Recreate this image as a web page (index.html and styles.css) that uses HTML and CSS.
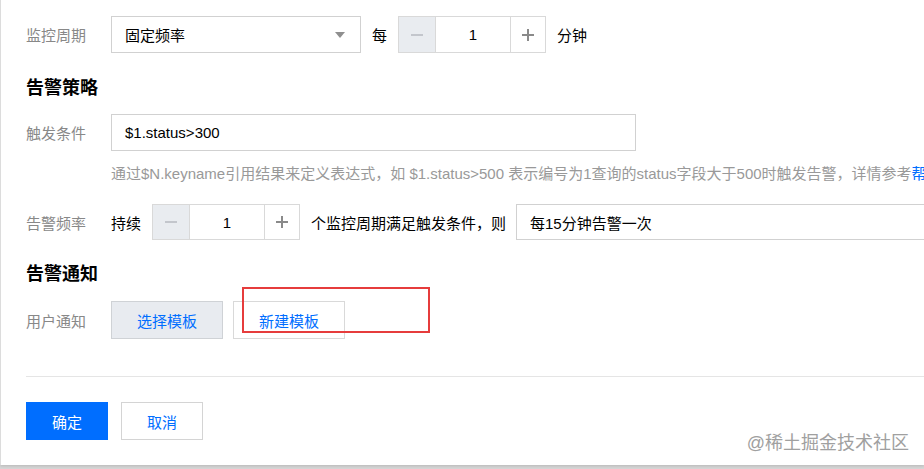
FILE: index.html
```html
<!DOCTYPE html>
<html lang="zh-CN">
<head>
    <meta charset="UTF-8">
    <meta name="viewport" content="width=device-width, initial-scale=1.0">
    <title>告警配置</title>
    <link rel="stylesheet" href="styles.css">
</head>
<body>
    <div class="page">
        <div class="form-row">
            <span class="label">监控周期</span>
            <div class="select period-select">
                <span>固定频率</span>
                <span class="arrow"></span>
            </div>
            <span class="text">每</span>
            <div class="stepper">
                <button class="step minus" disabled>
                    <svg width="14" height="14" viewBox="0 0 14 14"><path d="M1 7h12" stroke="#c3c6cc" stroke-width="2"/></svg>
                </button>
                <span class="step-value">1</span>
                <button class="step plus">
                    <svg width="14" height="14" viewBox="0 0 14 14"><path d="M1 7h12M7 1v12" stroke="#8a8a8a" stroke-width="2"/></svg>
                </button>
            </div>
            <span class="text">分钟</span>
        </div>

        <h3 class="section-title first">告警策略</h3>

        <div class="form-row trigger-row">
            <span class="label">触发条件</span>
            <input class="input trigger-input" type="text" value="$1.status&gt;300">
        </div>
        <p class="helper">通过$N.keyname引用结果来定义表达式，如 $1.status&gt;500 表示编号为1查询的status字段大于500时触发告警，详情参考<a href="#">帮助文档</a></p>

        <div class="form-row freq-row">
            <span class="label">告警频率</span>
            <span class="text first-text">持续</span>
            <div class="stepper small">
                <button class="step minus" disabled>
                    <svg width="14" height="14" viewBox="0 0 14 14"><path d="M1 7h12" stroke="#c3c6cc" stroke-width="2"/></svg>
                </button>
                <span class="step-value">1</span>
                <button class="step plus">
                    <svg width="14" height="14" viewBox="0 0 14 14"><path d="M1 7h12M7 1v12" stroke="#8a8a8a" stroke-width="2"/></svg>
                </button>
            </div>
            <span class="text">个监控周期满足触发条件，则</span>
            <div class="select freq-select">
                <span>每15分钟告警一次</span>
            </div>
        </div>

        <h3 class="section-title second">告警通知</h3>

        <div class="form-row notify-row">
            <span class="label">用户通知</span>
            <button class="btn btn-gray">选择模板</button>
            <button class="btn btn-white">新建模板</button>
        </div>

        <div class="divider"></div>

        <div class="footer">
            <button class="btn btn-primary">确定</button>
            <button class="btn btn-cancel">取消</button>
        </div>

        <div class="mark-box"></div>
        <div class="watermark">@稀土掘金技术社区</div>
    </div>
</body>
</html>
```

FILE: styles.css
```css
* {
    margin: 0;
    padding: 0;
    box-sizing: border-box;
}

body {
    font-family: "Liberation Sans", Arial, "Noto Sans CJK SC", sans-serif;
    font-size: 15px;
    color: #000;
    background-color: #d6d6d6;
    overflow: hidden;
    width: 924px;
    height: 469px;
}

.page {
    position: relative;
    height: 465px;
    background: white;
    border-left: 1px solid #dcdcdc;
    padding: 16px 0 0 25px;
    overflow: hidden;
    box-shadow: 0 1px 3px rgba(0, 0, 0, 0.15);
}

.form-row {
    display: flex;
    align-items: center;
    height: 37px;
    white-space: nowrap;
}

.label {
    width: 85px;
    color: #888;
    flex-shrink: 0;
}

.text {
    margin: 0 11px;
    color: #000;
}

.first-text {
    margin-left: 0;
}

.select {
    display: flex;
    align-items: center;
    justify-content: space-between;
    height: 100%;
    border: 1px solid #d1d1d1;
    padding: 0 13px;
    flex-shrink: 0;
}

.period-select {
    width: 250px;
}

.arrow {
    width: 0;
    height: 0;
    margin-right: 2px;
    border-left: 5px solid transparent;
    border-right: 5px solid transparent;
    border-top: 6px solid #8f8f8f;
}

.stepper {
    display: flex;
    height: 100%;
    border: 1px solid #d9d9d9;
    flex-shrink: 0;
}

.step {
    display: flex;
    align-items: center;
    justify-content: center;
    width: 37px;
    background: white;
    border: none;
    cursor: pointer;
}

.step.minus {
    background: #e9ecf0;
    border-right: 1px solid #d9d9d9;
    cursor: not-allowed;
}

.step.plus {
    width: 35px;
    border-left: 1px solid #d9d9d9;
}

.step-value {
    width: 74px;
    display: flex;
    align-items: center;
    justify-content: center;
}

.section-title {
    font-size: 18px;
    font-weight: bold;
    line-height: 24px;
    color: #000;
}

.section-title.first {
    margin-top: 23px;
}

.section-title.second {
    margin-top: 22px;
}

.trigger-row {
    margin-top: 14px;
}

.input {
    height: 100%;
    border: 1px solid #d1d1d1;
    padding: 0 13px;
    font-family: inherit;
    font-size: 15px;
    color: #000;
    outline: none;
}

.trigger-input {
    width: 525px;
}

.helper {
    margin: 13px 0 0 85px;
    line-height: 20px;
    color: #999;
    white-space: nowrap;
}

.helper a {
    color: #006eff;
    text-decoration: none;
}

.freq-row {
    margin-top: 20px;
    height: 36px;
}

.freq-select {
    width: 420px;
    margin-left: -1px;
}

.notify-row {
    margin-top: 15px;
    height: 38px;
}

.btn {
    height: 100%;
    font-family: inherit;
    font-size: 15px;
    cursor: pointer;
}

.btn-gray {
    width: 112px;
    background: #e8ebf0;
    border: 1px solid #cfd2d6;
    color: #006eff;
}

.btn-white {
    width: 112px;
    margin-left: 10px;
    background: white;
    border: 1px solid #d9d9d9;
    color: #006eff;
}

.divider {
    margin-top: 37px;
    height: 1px;
    background: #e5e5e5;
}

.footer {
    display: flex;
    gap: 13px;
    margin-top: 25px;
    height: 38px;
}

.btn-primary {
    width: 82px;
    background: #006eff;
    border: 1px solid #006eff;
    color: white;
}

.btn-cancel {
    width: 82px;
    background: white;
    border: 1px solid #d4d4d4;
    color: #006eff;
}

.mark-box {
    position: absolute;
    left: 241px;
    top: 287px;
    width: 188px;
    height: 46px;
    border: 2px solid #e63c3c;
}

.watermark {
    position: absolute;
    right: 15px;
    top: 431px;
    font-size: 18px;
    line-height: 24px;
    color: #a0a0a0;
    text-shadow: 0 0 1px white;
}
```
